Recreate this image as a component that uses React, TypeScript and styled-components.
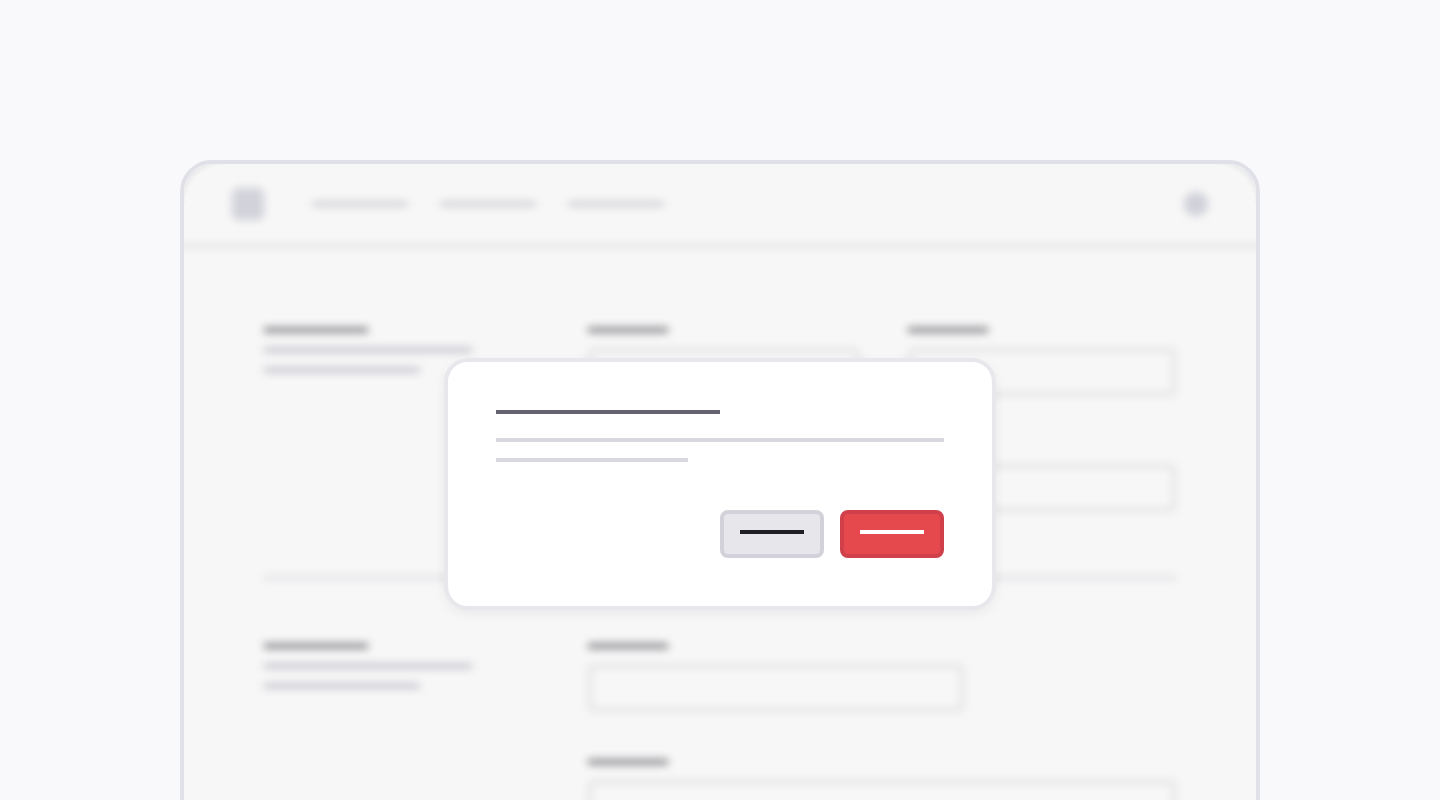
import React from "react";
import styled, { createGlobalStyle } from "styled-components";

const Global = createGlobalStyle`
  * { box-sizing: border-box; }
  body { margin: 0; background: #f9f9fb; font-family: "Liberation Sans", sans-serif; }
`;

const Page = styled.main`
  display: flex;
  justify-content: center;
  height: 100vh;
  padding: 160px 16px 0;
  overflow: hidden;
`;

const Frame = styled.div`
  position: relative;
  flex: 1;
  align-self: flex-start;
  max-width: 1080px;
  border: 4px solid #e0e1e8;
  border-radius: 32px;
  background: #ffffff;
  overflow: hidden;
`;

/* Wider than the frame so that the blurred header rule runs edge to edge. */
const Content = styled.div`
  margin: 0 -16px;
  background: #ffffff;
  filter: blur(4px);
`;

const Header = styled.header`
  display: flex;
  align-items: center;
  gap: 48px;
  height: 84px;
  padding: 0 64px;
  border-bottom: 4px solid #e7e7ea;
`;

const Logo = styled.div`
  width: 32px;
  height: 32px;
  border-radius: 6px;
  background: #d9dae2;
`;

const Nav = styled.nav`
  display: flex;
  flex: 1;
  gap: 32px;
`;

const Avatar = styled.div`
  width: 24px;
  height: 24px;
  border-radius: 50%;
  background: #d7d8e1;
`;

const colors = {
  ink: "#211f26",
  strong: "#65636d",
  label: "#605e68",
  muted: "#bcbac7",
  nav: "#cbcad2",
  soft: "#d9d8e0",
  inverse: "#ffffff",
};

const Bar = styled.span<{ $width: string; $tone: keyof typeof colors }>`
  display: block;
  width: ${(p) => p.$width};
  height: 4px;
  background: ${(p) => colors[p.$tone]};
`;

const Body = styled.div`
  padding: 80px 96px;
`;

const Section = styled.section`
  display: grid;
  grid-template-columns: 276px 1fr;
  gap: 48px;
`;

const Summary = styled.div`
  display: flex;
  flex-direction: column;
  gap: 16px;
`;

const Fields = styled.div`
  display: grid;
  grid-template-columns: 272fr 268fr;
  gap: 48px;
`;

const Field = styled.label<{ $wide?: boolean }>`
  display: flex;
  flex-direction: column;
  gap: 16px;
  grid-column: ${(p) => (p.$wide ? "1 / -1" : "auto")};
`;

const Input = styled.input<{ $width?: string }>`
  width: ${(p) => p.$width ?? "100%"};
  height: 48px;
  border: 4px solid #e7e8eb;
  border-radius: 6px;
  background: transparent;
`;

const Divider = styled.hr`
  height: 4px;
  margin: 64px 0;
  border: 0;
  background: #e5e6ea;
`;

/* Tint over the page, with a soft shade inside the two upper corners. */
const Overlay = styled.div`
  position: absolute;
  inset: 0;
  display: flex;
  justify-content: center;
  align-items: flex-start;
  padding-top: 194px;
  background:
    radial-gradient(circle at 40px 40px, transparent 38px, rgba(210, 211, 220, 0.5) 46px) left top / 40px 40px no-repeat,
    radial-gradient(circle at 0 40px, transparent 38px, rgba(210, 211, 220, 0.5) 46px) right top / 40px 40px no-repeat,
    rgba(0, 0, 0, 0.03);
`;

const Dialog = styled.div`
  width: 552px;
  padding: 48px;
  border: 4px solid #e7e7ec;
  border-radius: 24px;
  background: #ffffff;
  box-shadow: 0 4px 12px rgba(0, 0, 0, 0.06);
`;

const Copy = styled.div`
  display: flex;
  flex-direction: column;
  gap: 16px;
  margin-top: 24px;
`;

const Actions = styled.div`
  display: flex;
  justify-content: flex-end;
  gap: 16px;
  margin-top: 48px;
`;

const Button = styled.button<{ $danger?: boolean }>`
  display: flex;
  align-items: flex-start;
  width: 104px;
  height: 48px;
  padding: 16px;
  border: 4px solid ${(p) => (p.$danger ? "#d0404a" : "#d3d2da")};
  border-radius: 8px;
  background: ${(p) => (p.$danger ? "#e5484d" : "#e7e6eb")};
`;

function SectionSummary() {
  return (
    <Summary>
      <Bar $width="104px" $tone="label" />
      <Bar $width="208px" $tone="muted" />
      <Bar $width="156px" $tone="muted" />
    </Summary>
  );
}

function TextField({ wide, width }: { wide?: boolean; width?: string }) {
  return (
    <Field $wide={wide}>
      <Bar $width="80px" $tone="label" />
      <Input type="text" $width={width} />
    </Field>
  );
}

export default function App() {
  return (
    <>
      <Global />
      <Page>
        <Frame>
          <Content>
            <Header>
              <Logo />
              <Nav>
                <Bar $width="96px" $tone="nav" />
                <Bar $width="96px" $tone="nav" />
                <Bar $width="96px" $tone="nav" />
              </Nav>
              <Avatar />
            </Header>
            <Body>
              <Section>
                <SectionSummary />
                <Fields>
                  <TextField />
                  <TextField />
                  <TextField />
                  <TextField />
                </Fields>
              </Section>
              <Divider />
              <Section>
                <SectionSummary />
                <Fields>
                  <TextField wide width="376px" />
                  <TextField wide />
                </Fields>
              </Section>
            </Body>
          </Content>
          <Overlay>
            <Dialog role="dialog">
              <Bar $width="50%" $tone="strong" />
              <Copy>
                <Bar $width="100%" $tone="soft" />
                <Bar $width="192px" $tone="soft" />
              </Copy>
              <Actions>
                <Button type="button">
                  <Bar $width="100%" $tone="ink" />
                </Button>
                <Button type="button" $danger>
                  <Bar $width="100%" $tone="inverse" />
                </Button>
              </Actions>
            </Dialog>
          </Overlay>
        </Frame>
      </Page>
    </>
  );
}
